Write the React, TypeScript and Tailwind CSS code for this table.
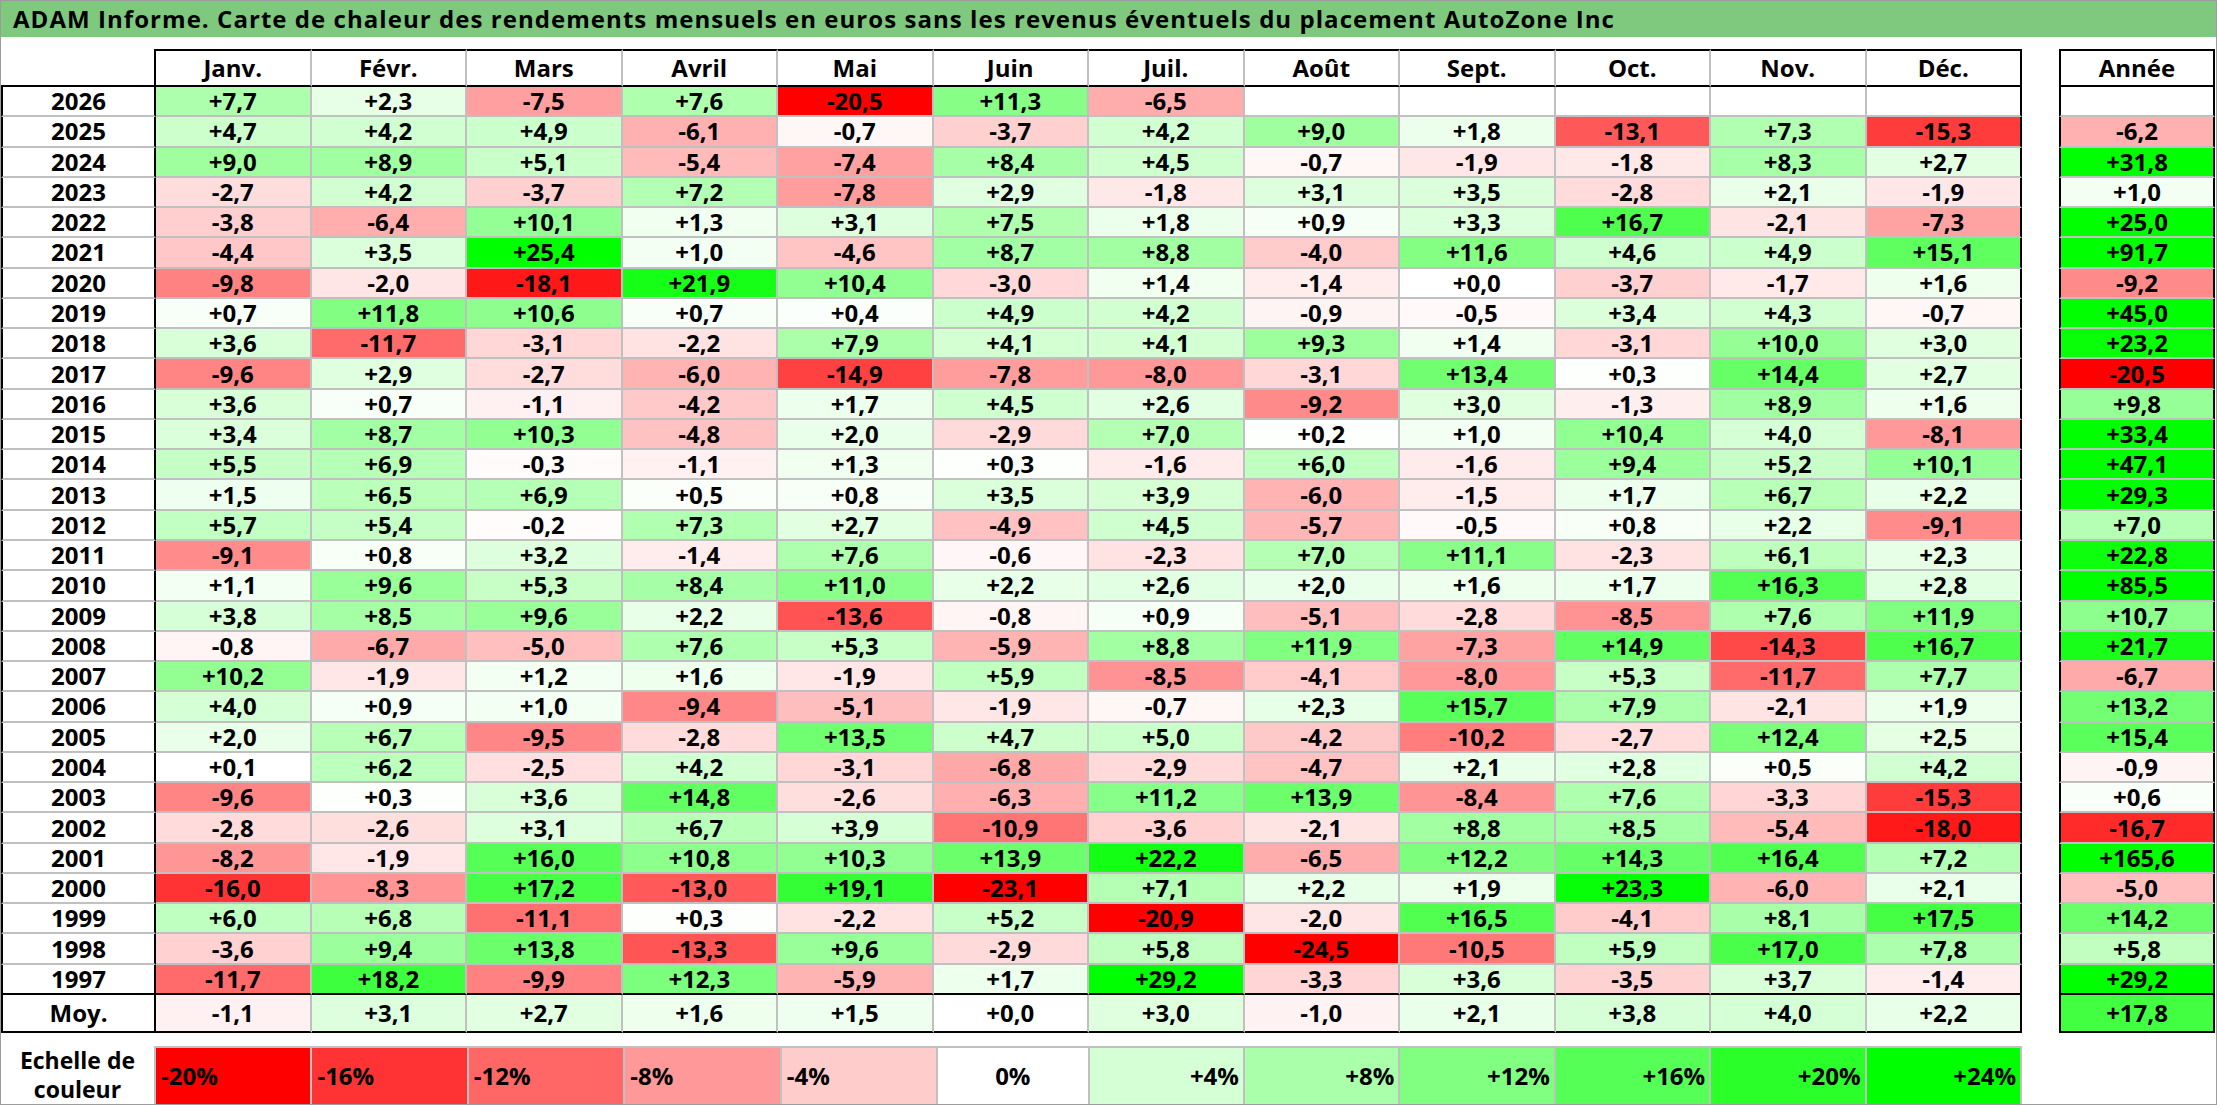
import React from 'react'

const MONTHS = ['Janv.', 'Févr.', 'Mars', 'Avril', 'Mai', 'Juin', 'Juil.', 'Août', 'Sept.', 'Oct.', 'Nov.', 'Déc.']

// year, 12 months, year total
const ROWS: [string, string[], string][] = [
  ['2026', ['+7,7', '+2,3', '-7,5', '+7,6', '-20,5', '+11,3', '-6,5', '', '', '', '', ''], ''],
  ['2025', ['+4,7', '+4,2', '+4,9', '-6,1', '-0,7', '-3,7', '+4,2', '+9,0', '+1,8', '-13,1', '+7,3', '-15,3'], '-6,2'],
  ['2024', ['+9,0', '+8,9', '+5,1', '-5,4', '-7,4', '+8,4', '+4,5', '-0,7', '-1,9', '-1,8', '+8,3', '+2,7'], '+31,8'],
  ['2023', ['-2,7', '+4,2', '-3,7', '+7,2', '-7,8', '+2,9', '-1,8', '+3,1', '+3,5', '-2,8', '+2,1', '-1,9'], '+1,0'],
  ['2022', ['-3,8', '-6,4', '+10,1', '+1,3', '+3,1', '+7,5', '+1,8', '+0,9', '+3,3', '+16,7', '-2,1', '-7,3'], '+25,0'],
  ['2021', ['-4,4', '+3,5', '+25,4', '+1,0', '-4,6', '+8,7', '+8,8', '-4,0', '+11,6', '+4,6', '+4,9', '+15,1'], '+91,7'],
  ['2020', ['-9,8', '-2,0', '-18,1', '+21,9', '+10,4', '-3,0', '+1,4', '-1,4', '+0,0', '-3,7', '-1,7', '+1,6'], '-9,2'],
  ['2019', ['+0,7', '+11,8', '+10,6', '+0,7', '+0,4', '+4,9', '+4,2', '-0,9', '-0,5', '+3,4', '+4,3', '-0,7'], '+45,0'],
  ['2018', ['+3,6', '-11,7', '-3,1', '-2,2', '+7,9', '+4,1', '+4,1', '+9,3', '+1,4', '-3,1', '+10,0', '+3,0'], '+23,2'],
  ['2017', ['-9,6', '+2,9', '-2,7', '-6,0', '-14,9', '-7,8', '-8,0', '-3,1', '+13,4', '+0,3', '+14,4', '+2,7'], '-20,5'],
  ['2016', ['+3,6', '+0,7', '-1,1', '-4,2', '+1,7', '+4,5', '+2,6', '-9,2', '+3,0', '-1,3', '+8,9', '+1,6'], '+9,8'],
  ['2015', ['+3,4', '+8,7', '+10,3', '-4,8', '+2,0', '-2,9', '+7,0', '+0,2', '+1,0', '+10,4', '+4,0', '-8,1'], '+33,4'],
  ['2014', ['+5,5', '+6,9', '-0,3', '-1,1', '+1,3', '+0,3', '-1,6', '+6,0', '-1,6', '+9,4', '+5,2', '+10,1'], '+47,1'],
  ['2013', ['+1,5', '+6,5', '+6,9', '+0,5', '+0,8', '+3,5', '+3,9', '-6,0', '-1,5', '+1,7', '+6,7', '+2,2'], '+29,3'],
  ['2012', ['+5,7', '+5,4', '-0,2', '+7,3', '+2,7', '-4,9', '+4,5', '-5,7', '-0,5', '+0,8', '+2,2', '-9,1'], '+7,0'],
  ['2011', ['-9,1', '+0,8', '+3,2', '-1,4', '+7,6', '-0,6', '-2,3', '+7,0', '+11,1', '-2,3', '+6,1', '+2,3'], '+22,8'],
  ['2010', ['+1,1', '+9,6', '+5,3', '+8,4', '+11,0', '+2,2', '+2,6', '+2,0', '+1,6', '+1,7', '+16,3', '+2,8'], '+85,5'],
  ['2009', ['+3,8', '+8,5', '+9,6', '+2,2', '-13,6', '-0,8', '+0,9', '-5,1', '-2,8', '-8,5', '+7,6', '+11,9'], '+10,7'],
  ['2008', ['-0,8', '-6,7', '-5,0', '+7,6', '+5,3', '-5,9', '+8,8', '+11,9', '-7,3', '+14,9', '-14,3', '+16,7'], '+21,7'],
  ['2007', ['+10,2', '-1,9', '+1,2', '+1,6', '-1,9', '+5,9', '-8,5', '-4,1', '-8,0', '+5,3', '-11,7', '+7,7'], '-6,7'],
  ['2006', ['+4,0', '+0,9', '+1,0', '-9,4', '-5,1', '-1,9', '-0,7', '+2,3', '+15,7', '+7,9', '-2,1', '+1,9'], '+13,2'],
  ['2005', ['+2,0', '+6,7', '-9,5', '-2,8', '+13,5', '+4,7', '+5,0', '-4,2', '-10,2', '-2,7', '+12,4', '+2,5'], '+15,4'],
  ['2004', ['+0,1', '+6,2', '-2,5', '+4,2', '-3,1', '-6,8', '-2,9', '-4,7', '+2,1', '+2,8', '+0,5', '+4,2'], '-0,9'],
  ['2003', ['-9,6', '+0,3', '+3,6', '+14,8', '-2,6', '-6,3', '+11,2', '+13,9', '-8,4', '+7,6', '-3,3', '-15,3'], '+0,6'],
  ['2002', ['-2,8', '-2,6', '+3,1', '+6,7', '+3,9', '-10,9', '-3,6', '-2,1', '+8,8', '+8,5', '-5,4', '-18,0'], '-16,7'],
  ['2001', ['-8,2', '-1,9', '+16,0', '+10,8', '+10,3', '+13,9', '+22,2', '-6,5', '+12,2', '+14,3', '+16,4', '+7,2'], '+165,6'],
  ['2000', ['-16,0', '-8,3', '+17,2', '-13,0', '+19,1', '-23,1', '+7,1', '+2,2', '+1,9', '+23,3', '-6,0', '+2,1'], '-5,0'],
  ['1999', ['+6,0', '+6,8', '-11,1', '+0,3', '-2,2', '+5,2', '-20,9', '-2,0', '+16,5', '-4,1', '+8,1', '+17,5'], '+14,2'],
  ['1998', ['-3,6', '+9,4', '+13,8', '-13,3', '+9,6', '-2,9', '+5,8', '-24,5', '-10,5', '+5,9', '+17,0', '+7,8'], '+5,8'],
  ['1997', ['-11,7', '+18,2', '-9,9', '+12,3', '-5,9', '+1,7', '+29,2', '-3,3', '+3,6', '-3,5', '+3,7', '-1,4'], '+29,2'],
]

const AVG = ['-1,1', '+3,1', '+2,7', '+1,6', '+1,5', '+0,0', '+3,0', '-1,0', '+2,1', '+3,8', '+4,0', '+2,2']
const AVG_YEAR = '+17,8'

const SCALE = [-20, -16, -12, -8, -4, 0, 4, 8, 12, 16, 20, 24]

// red at -20, white at 0, green at +24
function heat(v: number) {
  if (v < 0) {
    const c = Math.round(255 * (1 - Math.min(-v / 20, 1)))
    return `rgb(255,${c},${c})`
  }
  const c = Math.round(255 * (1 - Math.min(v / 24, 1)))
  return `rgb(${c},255,${c})`
}

const bg = (s: string) => (s ? heat(parseFloat(s.replace(',', '.'))) : '#ffffff')

export default function App() {
  return (
    <div className="w-[2217px] h-[1105px] bg-white border border-[#9c9c9c] flex flex-col font-['Open_Sans',sans-serif] font-bold text-black overflow-hidden">
      <div className="h-[36px] flex-shrink-0 bg-[#7fc97f] flex items-center pl-[12px] text-[24px] tracking-[1.05px] leading-none whitespace-nowrap">
        ADAM Informe. Carte de chaleur des rendements mensuels en euros sans les revenus éventuels du placement AutoZone Inc
      </div>

      <div className="flex mt-[12px]">
        {/* Monthly table */}
        <div className="w-[2021px] flex flex-col text-[24px] leading-none">
          <div className="flex h-[38px]">
            <div className="w-[155px] flex-shrink-0 border-r-2 border-b-2 border-black" />
            {MONTHS.map((m, i) => (
              <div key={m} className={`flex-1 min-w-0 flex items-center justify-center border-t-2 border-b-2 border-t-black border-b-black ${i === 11 ? 'border-r-2 border-r-black' : 'border-r-2 border-r-[#c0c0c0]'}`}>
                {m}
              </div>
            ))}
          </div>

          {ROWS.map(([year, vals], r) => {
            const last = r === ROWS.length - 1
            return (
              <div key={year} className="flex h-[30.27px]">
                <div className={`w-[155px] flex-shrink-0 flex items-center justify-center border-l-2 border-r-2 border-l-black border-r-black border-b-2 ${last ? 'border-b-black' : 'border-b-[#c0c0c0]'}`}>
                  {year}
                </div>
                {vals.map((v, i) => (
                  <div key={i} style={{ background: bg(v) }}
                    className={`flex-1 min-w-0 flex items-center justify-center border-b-2 border-r-2 ${last ? 'border-b-black' : 'border-b-[#c0c0c0]'} ${i === 11 ? 'border-r-black' : 'border-r-[#c0c0c0]'}`}>
                    {v}
                  </div>
                ))}
              </div>
            )
          })}

          <div className="flex h-[38px]">
            <div className="w-[155px] flex-shrink-0 flex items-center justify-center border-l-2 border-r-2 border-b-2 border-black">Moy.</div>
            {AVG.map((v, i) => (
              <div key={i} style={{ background: bg(v) }}
                className={`flex-1 min-w-0 flex items-center justify-center border-b-2 border-b-black border-r-2 ${i === 11 ? 'border-r-black' : 'border-r-[#c0c0c0]'}`}>
                {v}
              </div>
            ))}
          </div>
        </div>

        {/* Year totals */}
        <div className="w-[156px] ml-[37px] flex flex-col text-[24px] leading-none">
          <div className="h-[38px] flex items-center justify-center border-2 border-black">Année</div>
          {ROWS.map(([year, , total], r) => (
            <div key={year} style={{ background: bg(total) }}
              className={`h-[30.27px] flex items-center justify-center border-l-2 border-r-2 border-l-black border-r-black border-b-2 ${r === ROWS.length - 1 ? 'border-b-black' : 'border-b-[#c0c0c0]'}`}>
              {total}
            </div>
          ))}
          <div style={{ background: bg(AVG_YEAR) }} className="h-[38px] flex items-center justify-center border-l-2 border-r-2 border-b-2 border-black">
            {AVG_YEAR}
          </div>
        </div>
      </div>

      {/* Colour scale */}
      <div className="w-[2021px] flex h-[58px] mt-[13px] text-[24px] leading-none">
        <div className="w-[155px] flex-shrink-0 flex flex-col items-center justify-center text-[23px] leading-[29px] border-r-2 border-[#c0c0c0]">
          <span>Echelle de</span>
          <span>couleur</span>
        </div>
        {SCALE.map(s => (
          <div key={s} style={{ background: heat(s) }}
            className={`flex-1 min-w-0 flex items-center border-t-2 border-r-2 border-[#c0c0c0] ${s < 0 ? 'justify-start pl-[5px]' : s === 0 ? 'justify-center' : 'justify-end pr-[4px]'}`}>
            {s > 0 ? `+${s}%` : `${s}%`}
          </div>
        ))}
      </div>
    </div>
  )
}
